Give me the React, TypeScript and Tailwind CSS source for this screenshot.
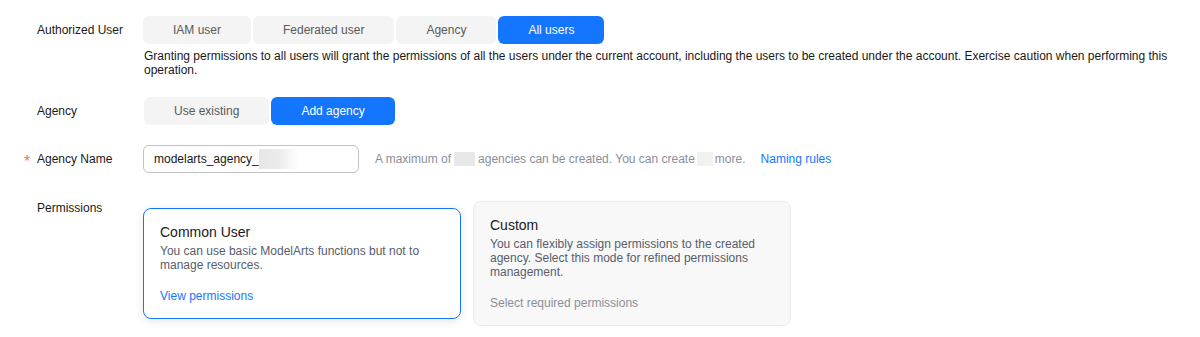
import React from "react";

const font = { fontFamily: '"Liberation Sans", Arial, sans-serif' };

function Label({ text, required, top }: { text: string; required?: boolean; top?: boolean }) {
  return (
    <div
      className={
        top
          ? "w-[143px] shrink-0 flex items-center self-start pl-[24px] text-[12px] leading-[14px] text-[#191919]"
          : "w-[143px] shrink-0 flex items-center pl-[24px] text-[12px] leading-[14px] text-[#191919]"
      }
    >
      <span className="w-[13px] text-[16px] leading-[14px] text-[#f66f6a] pt-[5px]">{required ? "*" : ""}</span>
      <span>{text}</span>
    </div>
  );
}

function Seg({ items, active }: { items: string[]; active: number }) {
  return (
    <div className="flex gap-[2px]">
      {items.map((t, i) => (
        <div
          key={t}
          className={
            i === active
              ? "h-[28px] px-[30px] flex items-center justify-center rounded-[6px] bg-[#1476ff] text-white text-[12px]"
              : "h-[28px] px-[30px] flex items-center justify-center rounded-[6px] bg-[#f4f4f4] text-[#595959] text-[12px]"
          }
        >
          {t}
        </div>
      ))}
    </div>
  );
}

export default function App() {
  return (
    <div className="w-[1200px] h-[337px] bg-white pt-[16px] pr-[24px]" style={font}>
      <div className="flex items-center">
        <Label text="Authorized User" />
        <Seg items={["IAM user", "Federated user", "Agency", "All users"]} active={3} />
      </div>
      <div className="ml-[144px] mt-[5px] text-[12px] leading-[14px] text-[#191919]">
        Granting permissions to all users will grant the permissions of all the users under the current account, including the users to be created under the account. Exercise caution when performing this operation.
      </div>
      <div className="flex items-center mt-[20px]">
        <Label text="Agency" />
        <div className="ml-[1px]">
          <Seg items={["Use existing", "Add agency"]} active={1} />
        </div>
      </div>
      <div className="flex items-center mt-[20px]">
        <Label text="Agency Name" required />
        <div className="w-[216px] h-[28px] border border-[#c2c2c2] rounded-[6px] flex items-center pl-[10px] text-[12px] text-[#191919]">
          <span>modelarts_agency_</span>
          <span className="inline-block w-[40px] h-[20px] bg-gradient-to-r from-[#e6e6e6] via-[#ececec] to-white" />
        </div>
        <div className="ml-[16px] flex items-center text-[12px] text-[#8a8e99]">
          <span>A maximum of</span>
          <span className="inline-block w-[21px] h-[14px] mx-[3px] bg-[#e8e8e8]" />
          <span>agencies can be created. You can create</span>
          <span className="inline-block w-[16px] h-[14px] mx-[2px] bg-[#f2f2f2]" />
          <span>more.</span>
          <span className="ml-[15px] text-[#1476ff]">Naming rules</span>
        </div>
      </div>
      <div className="flex mt-[28px]">
        <Label text="Permissions" top />
        <div className="flex items-center gap-[12px]">
          <div className="w-[318px] rounded-[8px] border border-[#1476ff] bg-white shadow-[0_2px_10px_rgba(0,0,0,0.1)] px-[16px] pt-[15px] pb-[15px]">
            <div className="text-[14px] leading-[16px] text-[#191919]">Common User</div>
            <div className="mt-[4px] text-[12px] leading-[14px] text-[#575d6c]">
              You can use basic ModelArts functions but not to manage resources.
            </div>
            <div className="mt-[17px] text-[12px] leading-[14px] text-[#1476ff]">View permissions</div>
          </div>
          <div className="w-[318px] rounded-[8px] border border-[#ececec] bg-[#f8f8f8] px-[16px] pt-[15px] pb-[15px]">
            <div className="text-[14px] leading-[16px] text-[#191919]">Custom</div>
            <div className="mt-[4px] text-[12px] leading-[14px] text-[#575d6c]">
              You can flexibly assign permissions to the created agency. Select this mode for refined permissions management.
            </div>
            <div className="mt-[17px] text-[12px] leading-[14px] text-[#8a8e99]">Select required permissions</div>
          </div>
        </div>
      </div>
    </div>
  );
}
